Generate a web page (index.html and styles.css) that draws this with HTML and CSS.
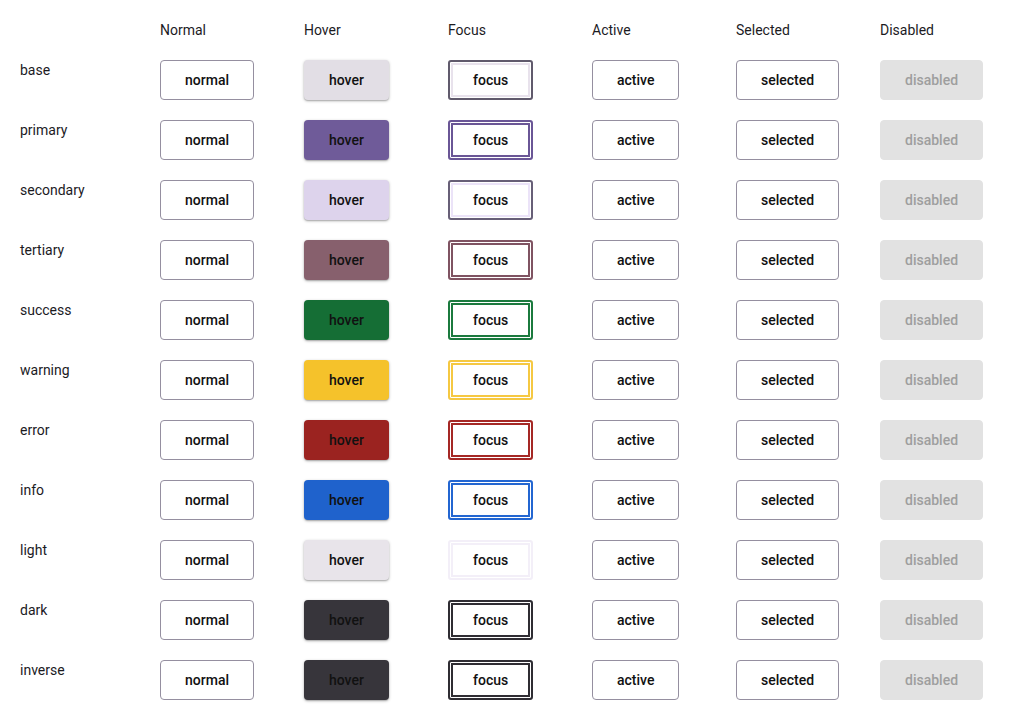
FILE: index.html
```html
<!DOCTYPE html>
<html lang="en">
<head>
<meta charset="utf-8">
<title>Button states</title>
<link rel="stylesheet" href="styles.css">
</head>
<body>
<div class="grid">
  <div class="head"></div>
  <div class="head">Normal</div>
  <div class="head">Hover</div>
  <div class="head">Focus</div>
  <div class="head">Active</div>
  <div class="head">Selected</div>
  <div class="head">Disabled</div>

  <div class="label">base</div>
  <div><button class="btn">normal</button></div>
  <div><button class="btn hover v-base">hover</button></div>
  <div><button class="btn focus v-base">focus</button></div>
  <div><button class="btn">active</button></div>
  <div><button class="btn">selected</button></div>
  <div><button class="btn disabled">disabled</button></div>

  <div class="label">primary</div>
  <div><button class="btn">normal</button></div>
  <div><button class="btn hover v-primary">hover</button></div>
  <div><button class="btn focus v-primary">focus</button></div>
  <div><button class="btn">active</button></div>
  <div><button class="btn">selected</button></div>
  <div><button class="btn disabled">disabled</button></div>

  <div class="label">secondary</div>
  <div><button class="btn">normal</button></div>
  <div><button class="btn hover v-secondary">hover</button></div>
  <div><button class="btn focus v-secondary">focus</button></div>
  <div><button class="btn">active</button></div>
  <div><button class="btn">selected</button></div>
  <div><button class="btn disabled">disabled</button></div>

  <div class="label">tertiary</div>
  <div><button class="btn">normal</button></div>
  <div><button class="btn hover v-tertiary">hover</button></div>
  <div><button class="btn focus v-tertiary">focus</button></div>
  <div><button class="btn">active</button></div>
  <div><button class="btn">selected</button></div>
  <div><button class="btn disabled">disabled</button></div>

  <div class="label">success</div>
  <div><button class="btn">normal</button></div>
  <div><button class="btn hover v-success">hover</button></div>
  <div><button class="btn focus v-success">focus</button></div>
  <div><button class="btn">active</button></div>
  <div><button class="btn">selected</button></div>
  <div><button class="btn disabled">disabled</button></div>

  <div class="label">warning</div>
  <div><button class="btn">normal</button></div>
  <div><button class="btn hover v-warning">hover</button></div>
  <div><button class="btn focus v-warning">focus</button></div>
  <div><button class="btn">active</button></div>
  <div><button class="btn">selected</button></div>
  <div><button class="btn disabled">disabled</button></div>

  <div class="label">error</div>
  <div><button class="btn">normal</button></div>
  <div><button class="btn hover v-error">hover</button></div>
  <div><button class="btn focus v-error">focus</button></div>
  <div><button class="btn">active</button></div>
  <div><button class="btn">selected</button></div>
  <div><button class="btn disabled">disabled</button></div>

  <div class="label">info</div>
  <div><button class="btn">normal</button></div>
  <div><button class="btn hover v-info">hover</button></div>
  <div><button class="btn focus v-info">focus</button></div>
  <div><button class="btn">active</button></div>
  <div><button class="btn">selected</button></div>
  <div><button class="btn disabled">disabled</button></div>

  <div class="label">light</div>
  <div><button class="btn">normal</button></div>
  <div><button class="btn hover v-light">hover</button></div>
  <div><button class="btn focus v-light">focus</button></div>
  <div><button class="btn">active</button></div>
  <div><button class="btn">selected</button></div>
  <div><button class="btn disabled">disabled</button></div>

  <div class="label">dark</div>
  <div><button class="btn">normal</button></div>
  <div><button class="btn hover v-dark">hover</button></div>
  <div><button class="btn focus v-dark">focus</button></div>
  <div><button class="btn">active</button></div>
  <div><button class="btn">selected</button></div>
  <div><button class="btn disabled">disabled</button></div>

  <div class="label">inverse</div>
  <div><button class="btn">normal</button></div>
  <div><button class="btn hover v-inverse">hover</button></div>
  <div><button class="btn focus v-inverse">focus</button></div>
  <div><button class="btn">active</button></div>
  <div><button class="btn">selected</button></div>
  <div><button class="btn disabled">disabled</button></div>
</div>
</body>
</html>
```
FILE: styles.css
```css
html, body {
  margin: 0;
  padding: 0;
  background: #ffffff;
}

body {
  font-family: Roboto, "Liberation Sans", sans-serif;
  font-size: 14px;
  color: #1c1b1f;
}

.grid {
  display: grid;
  grid-template-columns: 120px repeat(6, 124px);
  column-gap: 20px;
  row-gap: 20px;
  padding: 20px;
}

.head,
.label {
  line-height: 20px;
  height: 20px;
}

.btn {
  box-sizing: border-box;
  height: 40px;
  padding: 0 24px;
  border: 1px solid #958fa0;
  border-radius: 4px;
  background: #ffffff;
  color: #111111;
  font-family: Roboto, "Liberation Sans", sans-serif;
  font-size: 14px;
  font-weight: 500;
  line-height: 20px;
  display: block;
  cursor: pointer;
}

.hover {
  border-color: transparent;
  box-shadow: 0 1px 3px rgba(0, 0, 0, 0.3), 0 1px 1px rgba(0, 0, 0, 0.12);
}

.focus {
  border-width: 2px;
  padding: 0 23px;
  border-radius: 3px;
}

.disabled {
  border-color: #e2e2e2;
  background: #e2e2e2;
  color: #9e9e9e;
}

.hover.v-base { background: #e2dee5; }
.hover.v-primary { background: #6f5b99; }
.hover.v-secondary { background: #ddd3ec; }
.hover.v-tertiary { background: #87606d; }
.hover.v-success { background: #156e35; }
.hover.v-warning { background: #f5c22b; }
.hover.v-error { background: #9b2320; }
.hover.v-info { background: #1f62cc; }
.hover.v-light { background: #e8e4ea; }
.hover.v-dark { background: #37353b; }
.hover.v-inverse { background: #37353b; }

.focus.v-base { border-color: #605a6c; box-shadow: inset 0 0 0 1px #fff, inset 0 0 0 3px #e8e2ec; }
.focus.v-primary { border-color: #6a5696; box-shadow: inset 0 0 0 1px #fff, inset 0 0 0 3px #6a5696; }
.focus.v-secondary { border-color: #675f77; box-shadow: inset 0 0 0 1px #fff, inset 0 0 0 3px #ebe3f8; }
.focus.v-tertiary { border-color: #7f5362; box-shadow: inset 0 0 0 1px #fff, inset 0 0 0 3px #7f5362; }
.focus.v-success { border-color: #1b7a3e; box-shadow: inset 0 0 0 1px #fff, inset 0 0 0 3px #1b7a3e; }
.focus.v-warning { border-color: #f5c842; box-shadow: inset 0 0 0 1px #fff, inset 0 0 0 3px #f5c842; }
.focus.v-error { border-color: #a52825; box-shadow: inset 0 0 0 1px #fff, inset 0 0 0 3px #a52825; }
.focus.v-info { border-color: #2366d1; box-shadow: inset 0 0 0 1px #fff, inset 0 0 0 3px #2366d1; }
.focus.v-light { border-color: #f3eff8; box-shadow: inset 0 0 0 1px #fff, inset 0 0 0 3px #f3eff8; }
.focus.v-dark { border-color: #2f2d33; box-shadow: inset 0 0 0 1px #fff, inset 0 0 0 3px #2f2d33; }
.focus.v-inverse { border-color: #2f2d33; box-shadow: inset 0 0 0 1px #fff, inset 0 0 0 3px #2f2d33; }
```
